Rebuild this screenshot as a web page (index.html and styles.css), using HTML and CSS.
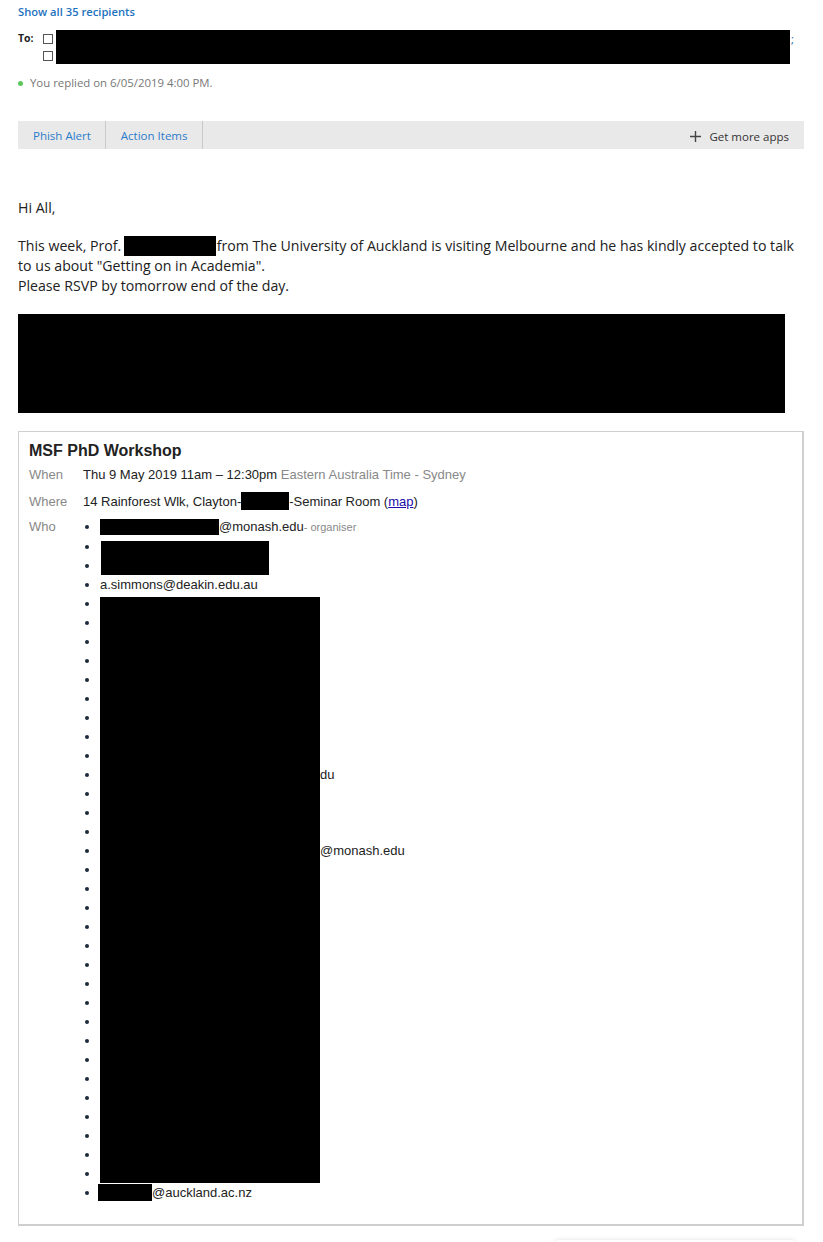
FILE: index.html
```html
<!DOCTYPE html>
<html lang="en">
<head>
    <meta charset="UTF-8">
    <meta name="viewport" content="width=device-width, initial-scale=1.0">
    <title>MSF PhD Workshop</title>
    <link rel="stylesheet" href="styles.css">
</head>
<body>
    <div class="message">
        <div class="recipients">
            <a class="show-all" href="#">Show all 35 recipients</a>
            <div class="to-row">
                <span class="to-label">To:</span>
                <div class="to-list">
                    <div class="to-item"><span class="check"></span><span class="redact to-name"></span><span class="sep">;</span></div>
                    <div class="to-item"><span class="check"></span><span class="redact to-name"></span></div>
                </div>
            </div>
            <div class="replied"><span class="dot"></span>You replied on 6/05/2019 4:00 PM.</div>
        </div>

        <div class="apps-bar">
            <a class="app-tab" href="#">Phish Alert</a>
            <a class="app-tab" href="#">Action Items</a>
            <a class="more-apps" href="#">
                <svg width="11" height="11" viewBox="0 0 11 11"><path d="M5.5 0v11M0 5.5h11" stroke="#444" stroke-width="1.4" fill="none"/></svg>
                Get more apps
            </a>
        </div>

        <div class="mail-body">
            <p class="greeting">Hi All,</p>
            <p class="intro">This week, Prof. <span class="redact prof-name"></span> from The University of Auckland is visiting Melbourne and he has kindly accepted to talk to us about "Getting on in Academia".<br>Please RSVP by tomorrow end of the day.</p>
            <div class="redact redact-block"></div>

            <div class="invite">
                <h2 class="invite-title">MSF PhD Workshop</h2>
                <div class="details">
                    <div class="label">When</div>
                    <div class="value">Thu 9 May 2019 11am – 12:30pm <span class="muted">Eastern Australia Time - Sydney</span></div>

                    <div class="label">Where</div>
                    <div class="value">14 Rainforest Wlk, Clayton-<span class="redact room"></span>-Seminar Room (<a href="#" class="map-link">map</a>)</div>

                    <div class="label who-label">Who</div>
                    <div class="value">
                        <ul class="who">
                            <li><span class="redact organiser"></span>@monash.edu<span class="role">- organiser</span></li>
                            <li><span class="redact guest guest-top"></span></li>
                            <li><span class="redact guest"></span></li>
                            <li>a.simmons@deakin.edu.au</li>
                            <li><span class="redact hidden-row first-row"></span></li>
                            <li><span class="redact hidden-row"></span></li>
                            <li><span class="redact hidden-row"></span></li>
                            <li><span class="redact hidden-row"></span></li>
                            <li><span class="redact hidden-row"></span></li>
                            <li><span class="redact hidden-row"></span></li>
                            <li><span class="redact hidden-row"></span></li>
                            <li><span class="redact hidden-row"></span></li>
                            <li><span class="redact hidden-row"></span></li>
                            <li><span class="redact hidden-row"></span>du</li>
                            <li><span class="redact hidden-row"></span></li>
                            <li><span class="redact hidden-row"></span></li>
                            <li><span class="redact hidden-row"></span></li>
                            <li><span class="redact hidden-row"></span>@monash.edu</li>
                            <li><span class="redact hidden-row"></span></li>
                            <li><span class="redact hidden-row"></span></li>
                            <li><span class="redact hidden-row"></span></li>
                            <li><span class="redact hidden-row"></span></li>
                            <li><span class="redact hidden-row"></span></li>
                            <li><span class="redact hidden-row"></span></li>
                            <li><span class="redact hidden-row"></span></li>
                            <li><span class="redact hidden-row"></span></li>
                            <li><span class="redact hidden-row"></span></li>
                            <li><span class="redact hidden-row"></span></li>
                            <li><span class="redact hidden-row"></span></li>
                            <li><span class="redact hidden-row"></span></li>
                            <li><span class="redact hidden-row"></span></li>
                            <li><span class="redact hidden-row"></span></li>
                            <li><span class="redact hidden-row"></span></li>
                            <li><span class="redact hidden-row"></span></li>
                            <li><span class="redact hidden-row"></span></li>
                            <li><span class="redact last-guest"></span>@auckland.ac.nz</li>
                        </ul>
                    </div>
                </div>
            </div>

            <div class="compose-peek"></div>
        </div>
    </div>
</body>
</html>
```

FILE: styles.css
```css
body {
    margin: 0;
    background-color: #fff;
    font-family: "Open Sans", "Noto Sans", sans-serif;
    color: #212121;
}
.message {
    padding: 0 19px 0 18px;
}
a {
    text-decoration: none;
}
.redact {
    display: inline-block;
    background-color: #000;
}

/* recipients header */
.recipients {
    padding-top: 4px;
}
.show-all {
    display: block;
    font-size: 11.2px;
    line-height: 16px;
    font-weight: 600;
    color: #1e72bd;
}
.to-row {
    display: flex;
    margin-top: 10px;
}
.to-label {
    width: 25px;
    font-size: 10.5px;
    line-height: 17px;
    font-weight: 700;
    color: #222;
}
.to-item {
    display: flex;
    align-items: center;
    height: 17px;
}
.check {
    width: 8px;
    height: 8px;
    border: 1px solid #555;
    margin-right: 3px;
}
.to-name {
    width: 734px;
    height: 17px;
}
.sep {
    font-size: 11px;
    color: #2a5f99;
    margin-left: 1px;
}
.replied {
    display: flex;
    align-items: center;
    margin-top: 11px;
    font-size: 11.4px;
    line-height: 16px;
    color: #777;
}
.dot {
    width: 5px;
    height: 5px;
    border-radius: 50%;
    background-color: #5cc85c;
    margin: 0 7px 0 0;
}

/* add-in bar */
.apps-bar {
    display: flex;
    align-items: stretch;
    height: 28px;
    margin-top: 30px;
    background-color: #e9e9e9;
}
.app-tab {
    display: flex;
    align-items: center;
    padding: 0 15px;
    border-right: 1px solid #c9c9c9;
    font-size: 11.5px;
    color: #2a7cc9;
}
.app-tab:first-child {
    padding-right: 14px;
}
.more-apps {
    display: flex;
    align-items: center;
    margin-left: auto;
    padding: 2px 15px 0 0;
    font-size: 11.5px;
    color: #333;
}
.more-apps svg {
    margin-right: 8px;
}

/* mail body */
.mail-body {
    font-size: 14.15px;
    line-height: 20px;
}
.mail-body p {
    margin: 0;
}
.greeting {
    padding-top: 49px;
}
.intro {
    padding-top: 18px;
}
.prof-name {
    width: 92px;
    height: 20px;
    vertical-align: top;
    margin: 0 -3px 0 -1px;
}
.redact-block {
    display: block;
    width: 767px;
    height: 99px;
    margin-top: 18px;
}

/* calendar invite */
.invite {
    margin-top: 18px;
    padding: 9px 10px 22px;
    border: 1px solid #cfcfcf;
    border-right-width: 2px;
    border-bottom-width: 2px;
    font-family: "Liberation Sans", Arial, sans-serif;
    color: #222;
}
.invite-title {
    margin: 0 0 5px;
    font-size: 16px;
    line-height: 19px;
    font-weight: 700;
}
.details {
    display: grid;
    grid-template-columns: 54px 1fr;
    row-gap: 8px;
    font-size: 13px;
    line-height: 19px;
}
.label {
    color: #888;
}
.muted {
    color: #888;
}
.room {
    width: 48px;
    height: 18px;
    vertical-align: top;
}
.map-link {
    color: #1a0dab;
    text-decoration: underline;
}
.who-label {
    margin-top: -2px;
}
.who {
    margin: -2px 0 0;
    padding-left: 17px;
}
.who li::marker {
    color: #1d2a3a;
}
.organiser {
    width: 119px;
    height: 16px;
    vertical-align: -3.5px;
}
.role {
    font-size: 11px;
    color: #888;
}
.guest {
    width: 168px;
    height: 19px;
    vertical-align: top;
    margin-left: 1px;
}
.guest-top {
    height: 15px;
    vertical-align: bottom;
}
.hidden-row {
    width: 220px;
    height: 19px;
    vertical-align: top;
}
.first-row {
    height: 16px;
    vertical-align: bottom;
}
.last-guest {
    width: 54px;
    height: 17px;
    vertical-align: -4px;
    margin-left: -2px;
}
.compose-peek {
    width: 240px;
    height: 20px;
    margin: 14px 0 0 537px;
    border-radius: 4px;
    box-shadow: 0 0 5px rgba(0, 0, 0, 0.12);
}
```
